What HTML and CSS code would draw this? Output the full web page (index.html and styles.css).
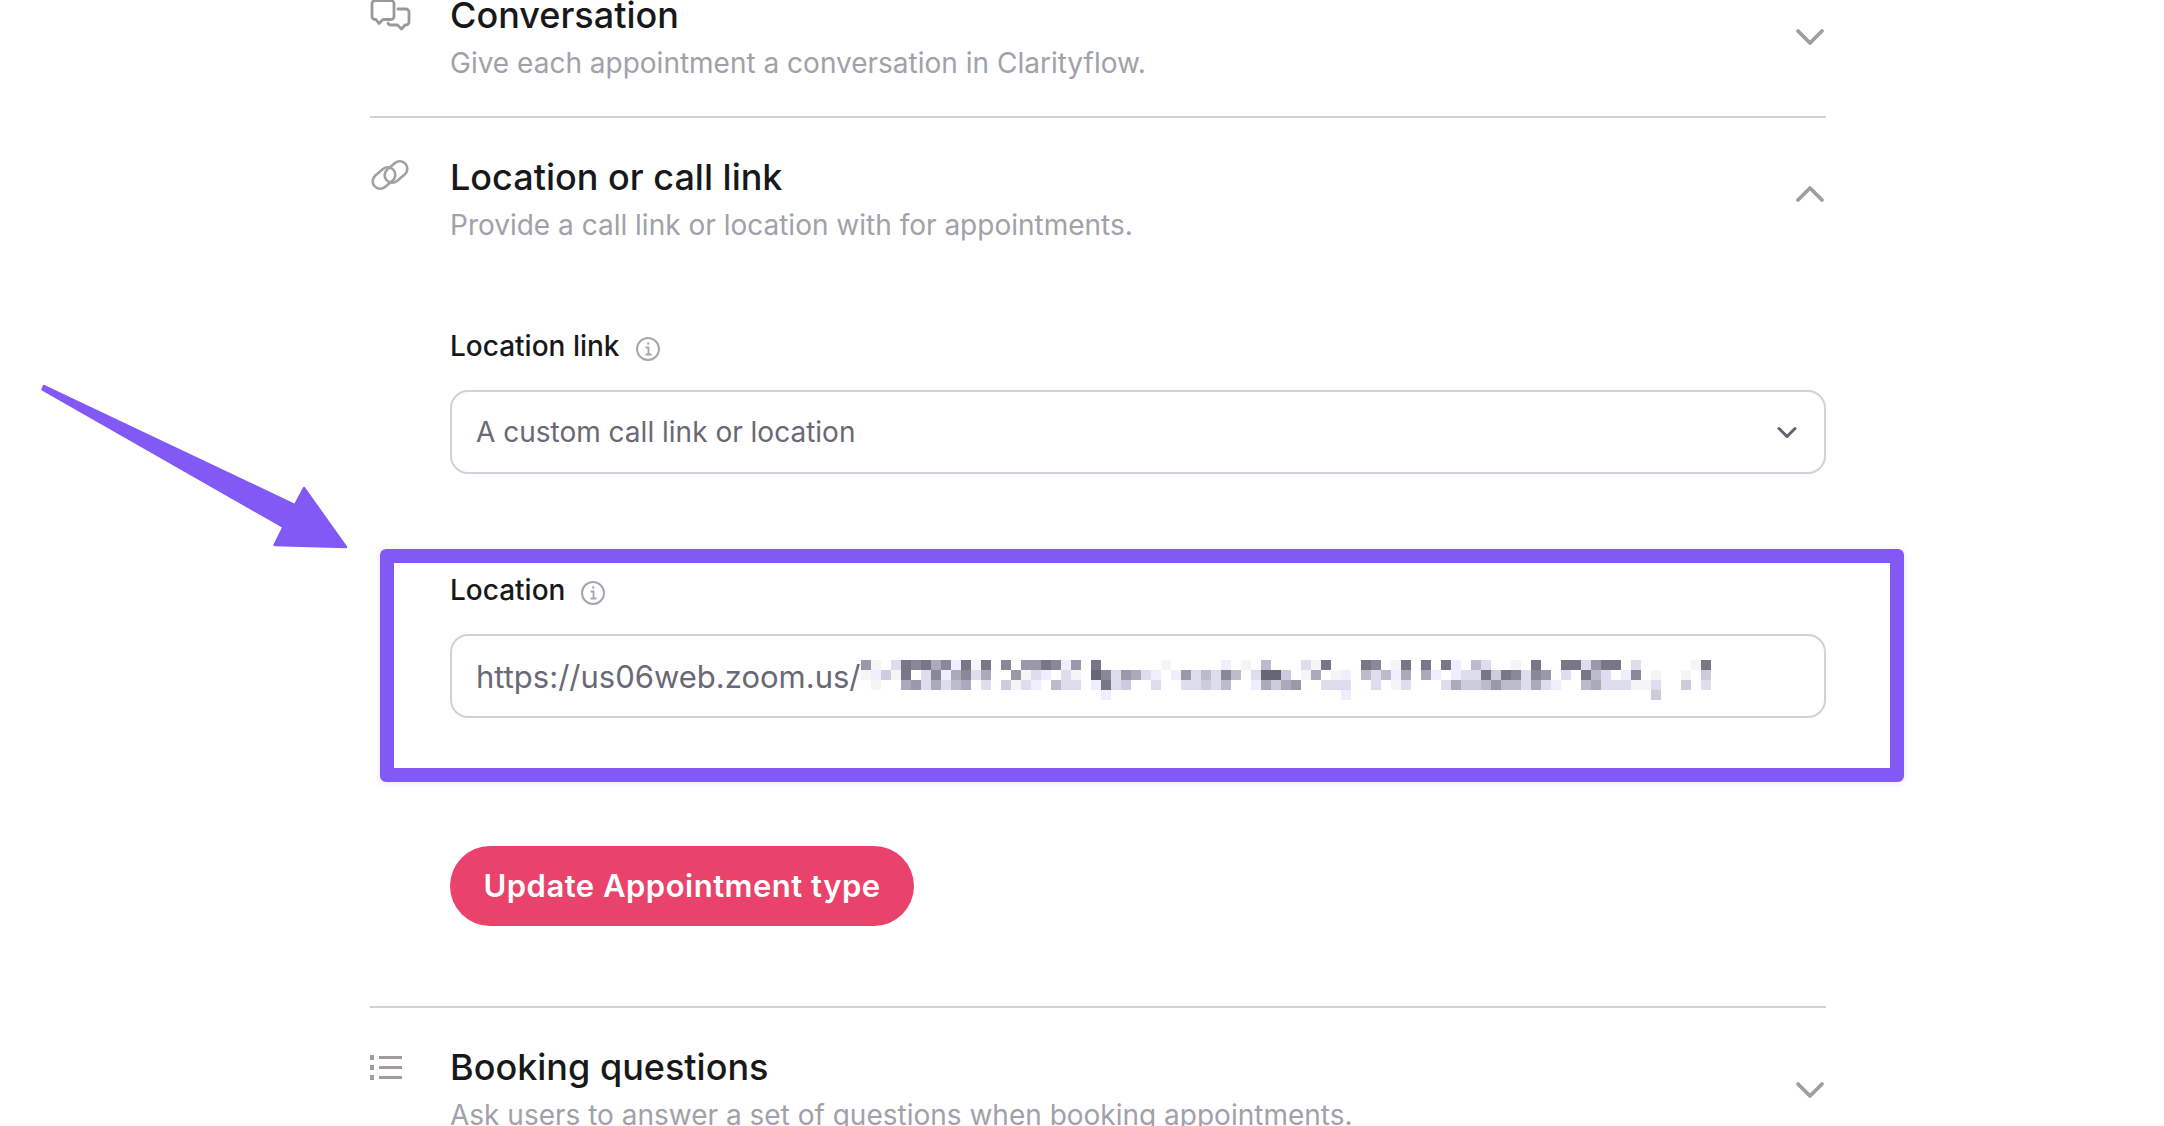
FILE: index.html
```html
<!DOCTYPE html>
<html lang="en">
<head>
<meta charset="utf-8">
<title>Appointment type</title>
<link rel="stylesheet" href="styles.css">
</head>
<body>
<main class="page">
  <section class="section section-first">
    <header class="head">
      <svg class="icon" width="41" height="32" viewBox="0 0 41 32" fill="none" stroke="#9c9899" stroke-width="2.8" stroke-linejoin="round" stroke-linecap="round"><path d="M5 .5h16a3 3 0 0 1 3 3v13a3 3 0 0 1-3 3h-8l-4 4-3-4H5a3 3 0 0 1-3-3v-13a3 3 0 0 1 3-3z"/><path d="M28 9h8a3 3 0 0 1 3 3v10a3 3 0 0 1-3 3h-1l-3.5 4-4-4H21a3 3 0 0 1-3-2"/></svg>
      <div class="head-text">
        <h2 class="title">Conversation</h2>
        <p class="sub">Give each appointment a conversation in Clarityflow.</p>
      </div>
      <svg class="chev" width="32" height="20" viewBox="0 0 32 20" fill="none" stroke="#a19c9f" stroke-width="3.8" stroke-linecap="round" stroke-linejoin="round"><path d="M4 4l12 12L28 4"/></svg>
    </header>
  </section>

  <section class="section section-open">
    <header class="head">
      <svg class="icon" width="41" height="32" viewBox="0 0 41 32" fill="none" stroke="#a3a0a3" stroke-width="2.6"><rect x="1.5" y="7.5" width="25" height="15" rx="7.5" transform="rotate(-40 14 15)"/><rect x="13.5" y="1.5" width="25" height="15" rx="7.5" transform="rotate(-40 26 9)"/></svg>
      <div class="head-text">
        <h2 class="title">Location or call link</h2>
        <p class="sub">Provide a call link or location with for appointments.</p>
      </div>
      <svg class="chev chev-up" width="32" height="20" viewBox="0 0 32 20" fill="none" stroke="#a19c9f" stroke-width="3.8" stroke-linecap="round" stroke-linejoin="round"><path d="M4 16L16 4l12 12"/></svg>
    </header>

    <div class="body">
      <div class="field field-link">
        <div class="label">Location link
          <svg class="info" width="26" height="26" viewBox="0 0 26 26" fill="none" stroke="#a6a6ae" stroke-width="2"><circle cx="13" cy="13" r="11"/><path d="M10.5 11.5H13.5V18M10.5 18.5h6" stroke-width="1.8"/><path d="M12.2 7.5h2" stroke-width="2.4"/></svg>
        </div>
        <div class="control select">
          <span>A custom call link or location</span>
          <svg width="20" height="13" viewBox="0 0 20 13" fill="none" stroke="#63636f" stroke-width="3" stroke-linecap="round" stroke-linejoin="round"><path d="M2 2.5l8 8 8-8"/></svg>
        </div>
      </div>

      <div class="field field-location">
        <div class="highlight"></div>
        <div class="label">Location
          <svg class="info" width="26" height="26" viewBox="0 0 26 26" fill="none" stroke="#a6a6ae" stroke-width="2"><circle cx="13" cy="13" r="11"/><path d="M10.5 11.5H13.5V18M10.5 18.5h6" stroke-width="1.8"/><path d="M12.2 7.5h2" stroke-width="2.4"/></svg>
        </div>
        <div class="control input">
          <span>https://us06web.zoom.us/</span>
          <svg class="mosaic" width="850" height="40" viewBox="0 0 85 4" shape-rendering="crispEdges">
            <g>
              <rect x="0" y="0" width="1" height="1" fill="#99a"/><rect x="1" y="0" width="1" height="1" fill="#f5f5f8"/><rect x="3" y="0" width="1" height="1" fill="#dde"/><rect x="4" y="0" width="1" height="1" fill="#778"/><rect x="5" y="0" width="1" height="1" fill="#889"/><rect x="6" y="0" width="1" height="1" fill="#778"/><rect x="7" y="0" width="1" height="1" fill="#aab"/><rect x="8" y="0" width="1" height="1" fill="#889"/><rect x="9" y="0" width="1" height="1" fill="#eef"/><rect x="10" y="0" width="1" height="1" fill="#778"/><rect x="11" y="0" width="1" height="1" fill="#f5f5f8"/><rect x="12" y="0" width="1" height="1" fill="#778"/><rect x="14" y="0" width="1" height="1" fill="#889"/><rect x="16" y="0" width="1" height="1" fill="#99a"/><rect x="17" y="0" width="1" height="1" fill="#99a"/><rect x="18" y="0" width="1" height="1" fill="#778"/><rect x="19" y="0" width="1" height="1" fill="#889"/><rect x="20" y="0" width="1" height="1" fill="#eef"/><rect x="21" y="0" width="1" height="1" fill="#99a"/><rect x="23" y="0" width="1" height="1" fill="#778"/><rect x="30" y="0" width="1" height="1" fill="#f5f5f8"/><rect x="36" y="0" width="1" height="1" fill="#eef"/><rect x="38" y="0" width="1" height="1" fill="#f5f5f8"/><rect x="40" y="0" width="1" height="1" fill="#bbc"/><rect x="44" y="0" width="1" height="1" fill="#dde"/><rect x="45" y="0" width="1" height="1" fill="#f5f5f8"/><rect x="46" y="0" width="1" height="1" fill="#778"/><rect x="50" y="0" width="1" height="1" fill="#778"/><rect x="51" y="0" width="1" height="1" fill="#889"/><rect x="53" y="0" width="1" height="1" fill="#f5f5f8"/><rect x="54" y="0" width="1" height="1" fill="#778"/><rect x="56" y="0" width="1" height="1" fill="#778"/><rect x="58" y="0" width="1" height="1" fill="#778"/><rect x="59" y="0" width="1" height="1" fill="#eef"/><rect x="61" y="0" width="1" height="1" fill="#bbc"/><rect x="62" y="0" width="1" height="1" fill="#dde"/><rect x="65" y="0" width="1" height="1" fill="#f5f5f8"/><rect x="67" y="0" width="1" height="1" fill="#778"/><rect x="70" y="0" width="1" height="1" fill="#778"/><rect x="71" y="0" width="1" height="1" fill="#778"/><rect x="72" y="0" width="1" height="1" fill="#dde"/><rect x="73" y="0" width="1" height="1" fill="#99a"/><rect x="74" y="0" width="1" height="1" fill="#778"/><rect x="75" y="0" width="1" height="1" fill="#778"/><rect x="77" y="0" width="1" height="1" fill="#dde"/><rect x="83" y="0" width="1" height="1" fill="#f5f5f8"/><rect x="84" y="0" width="1" height="1" fill="#778"/>
            </g>
            <g>
              <rect x="0" y="1" width="1" height="1" fill="#f5f5f8"/><rect x="1" y="1" width="1" height="1" fill="#eef"/><rect x="2" y="1" width="1" height="1" fill="#ccd"/><rect x="3" y="1" width="1" height="1" fill="#f5f5f8"/><rect x="4" y="1" width="1" height="1" fill="#778"/><rect x="6" y="1" width="1" height="1" fill="#dde"/><rect x="7" y="1" width="1" height="1" fill="#889"/><rect x="8" y="1" width="1" height="1" fill="#eef"/><rect x="9" y="1" width="1" height="1" fill="#aab"/><rect x="10" y="1" width="1" height="1" fill="#889"/><rect x="11" y="1" width="1" height="1" fill="#dde"/><rect x="12" y="1" width="1" height="1" fill="#aab"/><rect x="15" y="1" width="1" height="1" fill="#99a"/><rect x="16" y="1" width="1" height="1" fill="#f5f5f8"/><rect x="17" y="1" width="1" height="1" fill="#dde"/><rect x="18" y="1" width="1" height="1" fill="#eef"/><rect x="20" y="1" width="1" height="1" fill="#dde"/><rect x="21" y="1" width="1" height="1" fill="#f5f5f8"/><rect x="23" y="1" width="1" height="1" fill="#667"/><rect x="24" y="1" width="1" height="1" fill="#889"/><rect x="25" y="1" width="1" height="1" fill="#dde"/><rect x="26" y="1" width="1" height="1" fill="#99a"/><rect x="27" y="1" width="1" height="1" fill="#aab"/><rect x="28" y="1" width="1" height="1" fill="#dde"/><rect x="29" y="1" width="1" height="1" fill="#eef"/><rect x="31" y="1" width="1" height="1" fill="#eef"/><rect x="32" y="1" width="1" height="1" fill="#99a"/><rect x="33" y="1" width="1" height="1" fill="#dde"/><rect x="34" y="1" width="1" height="1" fill="#bbc"/><rect x="35" y="1" width="1" height="1" fill="#dde"/><rect x="36" y="1" width="1" height="1" fill="#889"/><rect x="37" y="1" width="1" height="1" fill="#bbc"/><rect x="39" y="1" width="1" height="1" fill="#dde"/><rect x="40" y="1" width="1" height="1" fill="#667"/><rect x="41" y="1" width="1" height="1" fill="#667"/><rect x="42" y="1" width="1" height="1" fill="#ccd"/><rect x="44" y="1" width="1" height="1" fill="#f5f5f8"/><rect x="45" y="1" width="1" height="1" fill="#aab"/><rect x="47" y="1" width="1" height="1" fill="#f5f5f8"/><rect x="48" y="1" width="1" height="1" fill="#eef"/><rect x="50" y="1" width="1" height="1" fill="#bbc"/><rect x="51" y="1" width="1" height="1" fill="#dde"/><rect x="52" y="1" width="1" height="1" fill="#bbc"/><rect x="53" y="1" width="1" height="1" fill="#eef"/><rect x="54" y="1" width="1" height="1" fill="#aab"/><rect x="56" y="1" width="1" height="1" fill="#aab"/><rect x="57" y="1" width="1" height="1" fill="#eef"/><rect x="59" y="1" width="1" height="1" fill="#eef"/><rect x="60" y="1" width="1" height="1" fill="#dde"/><rect x="61" y="1" width="1" height="1" fill="#dde"/><rect x="62" y="1" width="1" height="1" fill="#778"/><rect x="63" y="1" width="1" height="1" fill="#ccd"/><rect x="64" y="1" width="1" height="1" fill="#778"/><rect x="65" y="1" width="1" height="1" fill="#889"/><rect x="66" y="1" width="1" height="1" fill="#dde"/><rect x="67" y="1" width="1" height="1" fill="#889"/><rect x="68" y="1" width="1" height="1" fill="#99a"/><rect x="70" y="1" width="1" height="1" fill="#dde"/><rect x="72" y="1" width="1" height="1" fill="#778"/><rect x="73" y="1" width="1" height="1" fill="#bbc"/><rect x="74" y="1" width="1" height="1" fill="#dde"/><rect x="76" y="1" width="1" height="1" fill="#eef"/><rect x="77" y="1" width="1" height="1" fill="#889"/><rect x="79" y="1" width="1" height="1" fill="#f5f5f8"/><rect x="82" y="1" width="1" height="1" fill="#f5f5f8"/><rect x="84" y="1" width="1" height="1" fill="#ccd"/>
            </g>
            <g>
              <rect x="1" y="2" width="1" height="1" fill="#f5f5f8"/><rect x="4" y="2" width="1" height="1" fill="#aab"/><rect x="5" y="2" width="1" height="1" fill="#99a"/><rect x="6" y="2" width="1" height="1" fill="#dde"/><rect x="7" y="2" width="1" height="1" fill="#aab"/><rect x="8" y="2" width="1" height="1" fill="#dde"/><rect x="9" y="2" width="1" height="1" fill="#bbc"/><rect x="10" y="2" width="1" height="1" fill="#aab"/><rect x="12" y="2" width="1" height="1" fill="#dde"/><rect x="14" y="2" width="1" height="1" fill="#ccd"/><rect x="15" y="2" width="1" height="1" fill="#f5f5f8"/><rect x="16" y="2" width="1" height="1" fill="#dde"/><rect x="17" y="2" width="1" height="1" fill="#eef"/><rect x="19" y="2" width="1" height="1" fill="#bbc"/><rect x="20" y="2" width="1" height="1" fill="#dde"/><rect x="21" y="2" width="1" height="1" fill="#dde"/><rect x="23" y="2" width="1" height="1" fill="#eef"/><rect x="24" y="2" width="1" height="1" fill="#778"/><rect x="25" y="2" width="1" height="1" fill="#dde"/><rect x="26" y="2" width="1" height="1" fill="#ccd"/><rect x="29" y="2" width="1" height="1" fill="#dde"/><rect x="32" y="2" width="1" height="1" fill="#dde"/><rect x="33" y="2" width="1" height="1" fill="#dde"/><rect x="34" y="2" width="1" height="1" fill="#ccd"/><rect x="35" y="2" width="1" height="1" fill="#dde"/><rect x="36" y="2" width="1" height="1" fill="#bbc"/><rect x="39" y="2" width="1" height="1" fill="#eef"/><rect x="40" y="2" width="1" height="1" fill="#aab"/><rect x="41" y="2" width="1" height="1" fill="#ccd"/><rect x="42" y="2" width="1" height="1" fill="#aab"/><rect x="43" y="2" width="1" height="1" fill="#99a"/><rect x="46" y="2" width="1" height="1" fill="#dde"/><rect x="47" y="2" width="1" height="1" fill="#dde"/><rect x="48" y="2" width="1" height="1" fill="#dde"/><rect x="51" y="2" width="1" height="1" fill="#dde"/><rect x="53" y="2" width="1" height="1" fill="#f5f5f8"/><rect x="54" y="2" width="1" height="1" fill="#dde"/><rect x="58" y="2" width="1" height="1" fill="#dde"/><rect x="59" y="2" width="1" height="1" fill="#aab"/><rect x="60" y="2" width="1" height="1" fill="#ccd"/><rect x="61" y="2" width="1" height="1" fill="#ccd"/><rect x="62" y="2" width="1" height="1" fill="#bbc"/><rect x="63" y="2" width="1" height="1" fill="#99a"/><rect x="64" y="2" width="1" height="1" fill="#bbc"/><rect x="65" y="2" width="1" height="1" fill="#bbc"/><rect x="66" y="2" width="1" height="1" fill="#dde"/><rect x="67" y="2" width="1" height="1" fill="#aab"/><rect x="68" y="2" width="1" height="1" fill="#dde"/><rect x="69" y="2" width="1" height="1" fill="#eef"/><rect x="72" y="2" width="1" height="1" fill="#bbc"/><rect x="73" y="2" width="1" height="1" fill="#aab"/><rect x="74" y="2" width="1" height="1" fill="#dde"/><rect x="75" y="2" width="1" height="1" fill="#dde"/><rect x="76" y="2" width="1" height="1" fill="#dde"/><rect x="77" y="2" width="1" height="1" fill="#f5f5f8"/><rect x="78" y="2" width="1" height="1" fill="#f5f5f8"/><rect x="79" y="2" width="1" height="1" fill="#dde"/><rect x="82" y="2" width="1" height="1" fill="#ccd"/><rect x="84" y="2" width="1" height="1" fill="#dde"/>
            </g>
            <g>
              <rect x="24" y="3" width="1" height="1" fill="#eef"/><rect x="48" y="3" width="1" height="1" fill="#eef"/><rect x="79" y="3" width="1" height="1" fill="#ccd"/>
            </g>
          </svg>
        </div>
      </div>

      <button class="submit" type="button">Update Appointment type</button>
    </div>
  </section>

  <section class="section">
    <header class="head">
      <svg class="icon" width="41" height="32" viewBox="0 0 41 32" fill="none" stroke="#a19c9f" stroke-width="3"><path d="M9 4.5h23M9 14.5h23M9 24.5h23"/><path d="M0 4.5h4M0 14.5h4M0 24.5h4" stroke-width="5"/></svg>
      <div class="head-text">
        <h2 class="title">Booking questions</h2>
        <p class="sub">Ask users to answer a set of questions when booking appointments.</p>
      </div>
      <svg class="chev" width="32" height="20" viewBox="0 0 32 20" fill="none" stroke="#a19c9f" stroke-width="3.8" stroke-linecap="round" stroke-linejoin="round"><path d="M4 4l12 12L28 4"/></svg>
    </header>
  </section>
</main>

<svg class="arrow" width="360" height="560" viewBox="0 0 360 560" fill="#8259f5" stroke="#8259f5" stroke-width="2.4" stroke-linejoin="round"><path d="M44 386L42.5 389.5L283.5 527L274.5 545L346 547L304 488L295 505Z"/></svg>
</body>
</html>
```
FILE: styles.css
```css
* { box-sizing: border-box; }
html, body { margin: 0; height: 100%; background: #fff; }
body {
  position: relative;
  overflow: hidden;
  font-family: "Inter", "Lato", sans-serif;
  color: #18181b;
}
.page { width: 1456px; margin: -8px 0 0 370px; }
.section { padding: 36px 0 0; border-top: 2px solid #d2d1da; }
.section-first { padding: 0 0 32px; border-top: 0; }
.head { display: flex; align-items: flex-start; }
.icon { flex: none; margin: 9px 39px 0 0; overflow: visible; }
.section-first .icon { margin-top: 8px; }
.head-text { flex: 1; min-width: 0; }
.title { margin: 0; font-size: 36px; line-height: 46px; font-weight: 500; }
.sub { margin: 4px 0 0; font-size: 28px; line-height: 42px; color: #a1a1aa; white-space: nowrap; }
.chev { flex: none; margin: 36px 0 0 0; }
.section-first .chev { margin-top: 35px; }
.chev-up { margin-top: 30px; }
.body { padding: 79px 0 80px 80px; }
.label { display: flex; align-items: center; gap: 15px; font-size: 28px; line-height: 42px; font-weight: 500; }
.info { margin-top: 5px; }
.control {
  position: relative;
  display: flex;
  align-items: center;
  justify-content: space-between;
  height: 84px;
  margin-top: 23px;
  padding: 0 27px 0 24px;
  border: 2px solid #d2d1da;
  border-radius: 18px;
  font-size: 28px;
  color: #696975;
  background: #fff;
}
.input { font-size: 31px; }
.field-location { position: relative; margin-top: 95px; }
.highlight {
  position: absolute;
  left: -70px;
  right: -78px;
  top: -20px;
  bottom: -64px;
  border: 14px solid #8259f5;
  border-radius: 6px;
  box-shadow: 0 1px 6px rgba(130, 89, 245, .18);
  pointer-events: none;
}
.field-location .label, .field-location .control { position: relative; }
.mosaic { position: absolute; left: 409px; top: 24px; }
.submit {
  display: block;
  width: 464px;
  height: 80px;
  margin: 128px 0 0;
  padding: 0 0 2px;
  border: 0;
  border-radius: 40px;
  background: #e9436c;
  color: #fff;
  font: 600 31px/1 "Inter", "Lato", sans-serif;
  letter-spacing: .5px;
}
.arrow { position: absolute; left: 0; top: 0; }
```
